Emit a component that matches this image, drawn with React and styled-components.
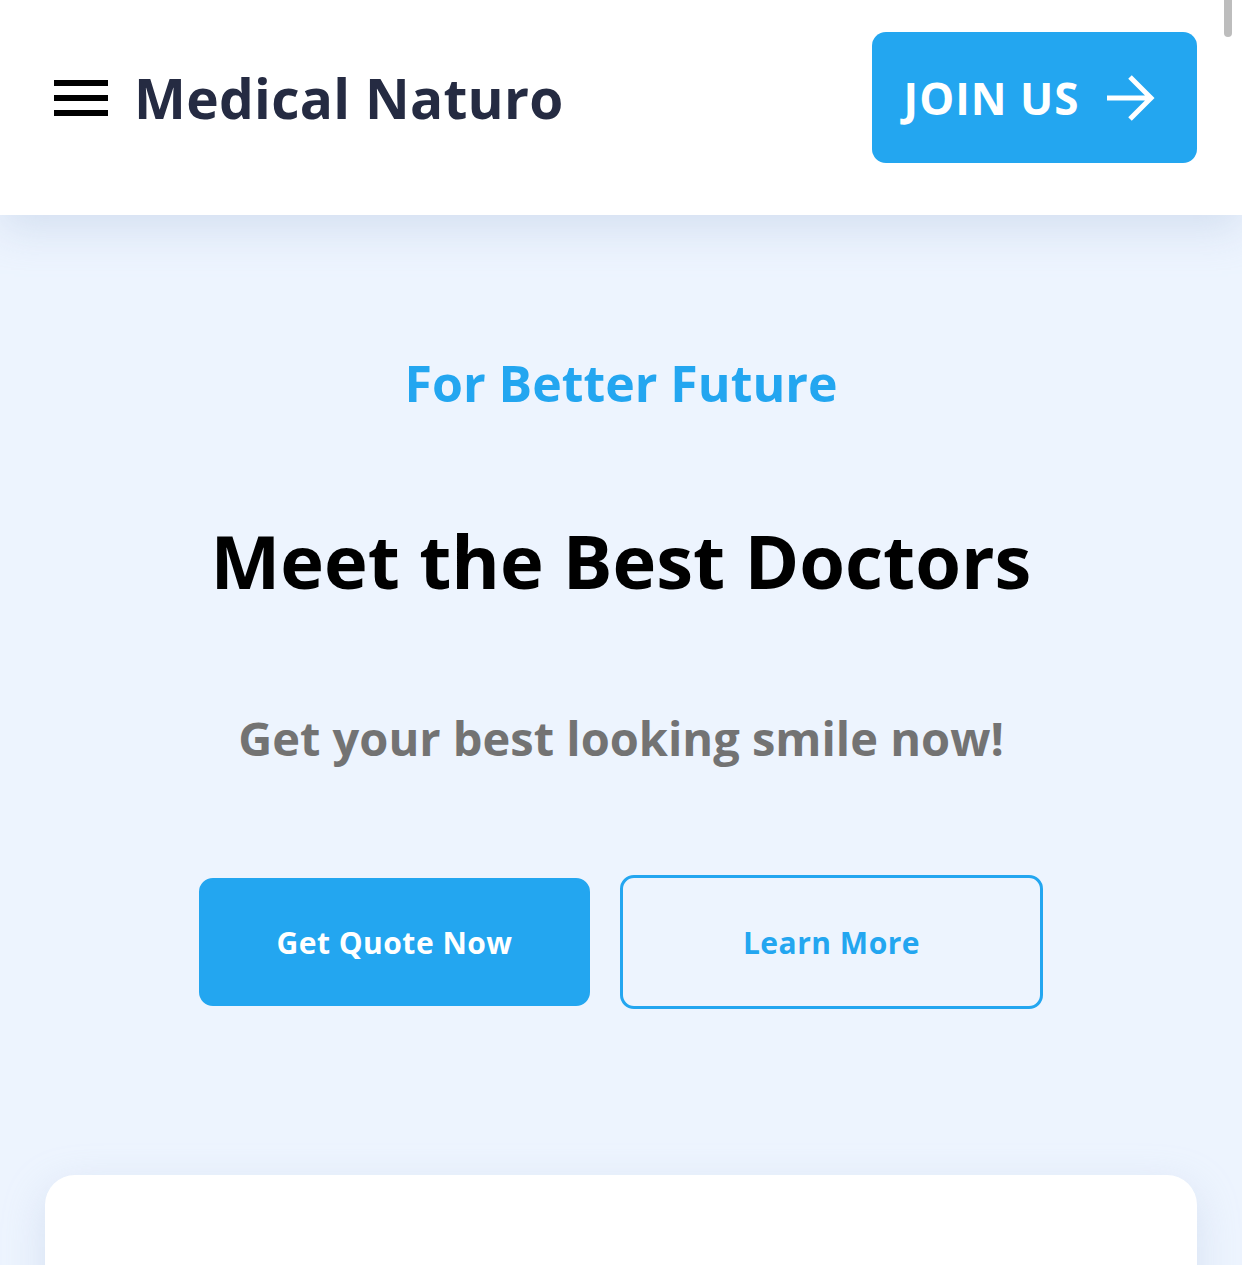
import React from 'react';
import styled, { createGlobalStyle } from 'styled-components';

const GlobalStyle = createGlobalStyle`
  html, body {
    margin: 0;
    padding: 0;
    overflow: hidden;
    background: #edf4fe;
  }
  * {
    box-sizing: border-box;
  }
`;

const Page = styled.div`
  position: relative;
  width: 1242px;
  height: 1265px;
  overflow: hidden;
  background: #edf4fe;
  font-family: 'Open Sans', 'Noto Sans', sans-serif;
`;

const Header = styled.header`
  position: relative;
  z-index: 2;
  height: 215px;
  background: #fff;
  display: flex;
  align-items: center;
  justify-content: space-between;
  padding: 0 45px 20px 54px;
  box-shadow: 0 13px 40px rgba(180, 198, 224, 0.45);
`;

const Brand = styled.div`
  display: flex;
  align-items: center;
  gap: 26px;
`;

const Burger = styled.button`
  width: 54px;
  height: 36px;
  padding: 0;
  border: none;
  background: transparent;
  display: flex;
  flex-direction: column;
  justify-content: space-between;
  cursor: pointer;

  span {
    display: block;
    height: 6px;
    background: #000;
  }
`;

const Logo = styled.h1`
  margin: 0;
  font-size: 55px;
  font-weight: 700;
  color: #252b42;
  letter-spacing: 0.3px;
`;

const JoinButton = styled.button`
  height: 131px;
  width: 325px;
  padding: 0 10px 0 0;
  border: none;
  border-radius: 14px;
  background: #23a6f0;
  color: #fff;
  font-family: inherit;
  font-size: 44px;
  font-weight: 700;
  letter-spacing: 1px;
  display: flex;
  align-items: center;
  justify-content: center;
  gap: 26px;
  cursor: pointer;
`;

const Hero = styled.section`
  display: flex;
  flex-direction: column;
  align-items: center;
  text-align: center;
  padding-top: 136px;
`;

const Kicker = styled.h5`
  margin: 0;
  font-size: 50px;
  font-weight: 700;
  color: #23a6f0;
  line-height: 64px;
`;

const Title = styled.h2`
  margin: 101px 0 0;
  font-size: 74px;
  font-weight: 700;
  color: #000;
  line-height: 90px;
`;

const Subtitle = styled.p`
  margin: 100px 0 0;
  font-size: 47px;
  font-weight: 700;
  color: #737373;
  line-height: 64px;
`;

const Actions = styled.div`
  margin-top: 105px;
  display: flex;
  align-items: center;
  gap: 30px;
`;

const ActionButton = styled.button`
  height: ${(p) => (p.$outline ? '134px' : '128px')};
  width: ${(p) => (p.$outline ? '423px' : '391px')};
  border-radius: 14px;
  border: 3px solid #23a6f0;
  background: ${(p) => (p.$outline ? 'transparent' : '#23a6f0')};
  color: ${(p) => (p.$outline ? '#23a6f0' : '#fff')};
  font-family: inherit;
  font-size: 30px;
  font-weight: 700;
  letter-spacing: 0.5px;
  cursor: pointer;
`;

const Card = styled.div`
  margin: 166px 45px 0;
  height: 400px;
  background: #fff;
  border-radius: 30px;
  box-shadow: 0 13px 40px rgba(180, 198, 224, 0.4);
`;

const ScrollThumb = styled.div`
  position: absolute;
  top: 0;
  right: 10px;
  width: 8px;
  height: 37px;
  border-radius: 0 0 4px 4px;
  background: #bdbdbd;
  z-index: 5;
`;

const ArrowIcon = () => (
  <svg width="50" height="48" viewBox="0 0 50 48" fill="none">
    <path d="M2 24H46M25 3L46 24L25 45" stroke="#fff" strokeWidth="5" />
  </svg>
);

export default function App() {
  return (
    <Page>
      <GlobalStyle />
      <Header>
        <Brand>
          <Burger aria-label="menu">
            <span />
            <span />
            <span />
          </Burger>
          <Logo>Medical Naturo</Logo>
        </Brand>
        <JoinButton>
          JOIN US
          <ArrowIcon />
        </JoinButton>
      </Header>
      <Hero>
        <Kicker>For Better Future</Kicker>
        <Title>Meet the Best Doctors</Title>
        <Subtitle>Get your best looking smile now!</Subtitle>
        <Actions>
          <ActionButton>Get Quote Now</ActionButton>
          <ActionButton $outline>Learn More</ActionButton>
        </Actions>
      </Hero>
      <Card />
      <ScrollThumb />
    </Page>
  );
}
